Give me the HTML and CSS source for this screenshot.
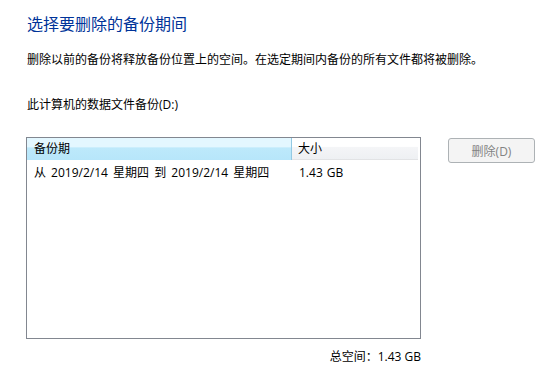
FILE: index.html
```html
<!DOCTYPE html>
<html lang="zh-CN">
<head>
<meta charset="utf-8">
<link rel="stylesheet" href="styles.css">
</head>
<body>
<div class="page">
  <h1 class="title">选择要删除的备份期间</h1>
  <p class="desc">删除以前的备份将释放备份位置上的空间。在选定期间内备份的所有文件都将被删除。</p>
  <p class="label">此计算机的数据文件备份(D:)</p>
  <div class="main">
    <div class="listbox">
      <div class="header">
        <div class="hcol hcol-period">备份期</div>
        <div class="hcol hcol-size">大小</div>
      </div>
      <div class="row">
        <div class="cell cell-period">从 2019/2/14 星期四 到 2019/2/14 星期四</div>
        <div class="cell cell-size">1.43 GB</div>
      </div>
    </div>
    <button class="btn" disabled>删除(D)</button>
  </div>
  <div class="total">总空间：1.43 GB</div>
</div>
</body>
</html>
```
FILE: styles.css
```css
html, body {
  margin: 0;
  padding: 0;
  background: #ffffff;
}
body {
  font-family: "Open Sans", "Noto Sans CJK SC", "Liberation Sans", sans-serif;
  font-size: 12px;
  color: #000000;
}
.page {
  padding-left: 26px;
  width: 395px;
}
.title {
  margin: 14px 0 0 1px;
  font-size: 16px;
  line-height: 20px;
  font-weight: normal;
  color: #003399;
}
.desc {
  margin: 18px 0 0 1px;
  line-height: 16px;
  white-space: nowrap;
}
.label {
  margin: 29px 0 0 1px;
  line-height: 16px;
}
.main {
  margin-top: 24px;
  display: flex;
  align-items: flex-start;
  gap: 27px;
}
.listbox {
  flex: none;
  width: 393px;
  height: 200px;
  border: 1px solid #828790;
  background: #ffffff;
}
.header {
  display: flex;
  height: 22px;
  margin-right: 2px;
}
.hcol {
  line-height: 22px;
  padding-left: 7px;
  box-sizing: border-box;
}
.hcol-period {
  width: 265px;
  background: linear-gradient(#e3f7ff 0%, #e3f7ff 40%, #bde9fb 45%, #b7e6fa 100%);
  border-right: 1px solid #93c9e3;
}
.hcol-size {
  flex: 1;
  background: linear-gradient(#ffffff 0%, #ffffff 40%, #f4f5f7 45%, #eef0f3 100%);
  border-bottom: 1px solid #e2e3e5;
  padding-left: 6px;
}
.row {
  display: flex;
  height: 20px;
  margin-top: 3px;
}
.cell {
  line-height: 20px;
  padding-left: 7px;
  box-sizing: border-box;
  white-space: nowrap;
}
.cell-period {
  width: 265px;
  word-spacing: 2px;
}
.cell-size {
  padding-left: 7px;
  word-spacing: 1px;
}
.btn {
  flex: none;
  margin-top: 1px;
  width: 87px;
  height: 25px;
  border: 1px solid #adb2b5;
  border-radius: 3px;
  background: #f4f4f4;
  color: #838383;
  font-family: inherit;
  font-size: 12px;
  padding: 0;
}
.total {
  margin-top: 10px;
  text-align: right;
  line-height: 16px;
}
```
